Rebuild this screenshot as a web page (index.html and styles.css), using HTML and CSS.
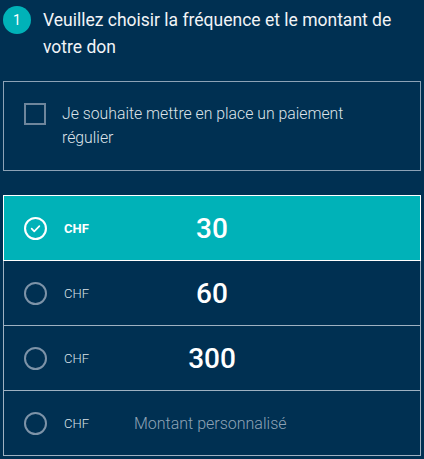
FILE: index.html
```html
<!DOCTYPE html>
<html lang="fr">
<head>
<meta charset="utf-8">
<link rel="stylesheet" href="styles.css">
</head>
<body>
<div class="page">
  <div class="step">
    <span class="step-num">1</span>
    <h2 class="step-title">Veuillez choisir la fréquence et le montant de votre don</h2>
  </div>

  <label class="recurring">
    <span class="checkbox"></span>
    <span class="recurring-text">Je souhaite mettre en place un paiement régulier</span>
  </label>

  <div class="amounts">
    <div class="amount-row selected">
      <div class="amount-left">
        <span class="radio checked">
          <svg viewBox="0 0 22 22" width="22" height="22"><circle cx="11" cy="11" r="10" fill="none" stroke="#fff" stroke-width="2"/><path d="M7.3 11.2l2.5 2.5 4.9-5" fill="none" stroke="#fff" stroke-width="1.6" stroke-linecap="round" stroke-linejoin="round"/></svg>
        </span>
        <span class="currency">CHF</span>
      </div>
      <span class="amount">30</span>
      <span></span>
    </div>
    <div class="amount-row">
      <div class="amount-left">
        <span class="radio"></span>
        <span class="currency">CHF</span>
      </div>
      <span class="amount">60</span>
      <span></span>
    </div>
    <div class="amount-row">
      <div class="amount-left">
        <span class="radio"></span>
        <span class="currency">CHF</span>
      </div>
      <span class="amount">300</span>
      <span></span>
    </div>
    <div class="amount-row custom">
      <span class="radio"></span>
      <span class="currency">CHF</span>
      <input class="custom-input" type="text" placeholder="Montant personnalisé">
    </div>
  </div>
</div>
</body>
</html>
```

FILE: styles.css
```css
* { box-sizing: border-box; }

html, body {
  margin: 0;
  padding: 0;
  background: #003052;
}

body {
  font-family: Roboto, "Liberation Sans", Arial, sans-serif;
  color: #f2f4f7;
  width: 424px;
  height: 459px;
  overflow: hidden;
}

.page {
  padding: 7px 3px 0 3px;
}

.step {
  display: flex;
  align-items: flex-start;
  gap: 12px;
}

.step-num {
  flex: none;
  width: 28px;
  height: 28px;
  margin-top: -1px;
  border-radius: 50%;
  background: #00b2b8;
  color: #fff;
  font-size: 14px;
  font-weight: 400;
  display: flex;
  align-items: center;
  justify-content: center;
}

.step-title {
  margin: 0;
  font-size: 17.5px;
  font-weight: 400;
  line-height: 27px;
  color: #f2f4f7;
}

.recurring {
  display: flex;
  align-items: flex-start;
  gap: 16px;
  margin-top: 20px;
  padding: 20px;
  border: 1px solid #8ca2b6;
  min-height: 90px;
}

.checkbox {
  flex: none;
  width: 22px;
  height: 22px;
  margin-top: 1px;
  border: 2px solid #6e869c;
}

.recurring-text {
  font-size: 15.8px;
  font-weight: 300;
  line-height: 24px;
  color: #dde3e9;
  padding-right: 50px;
}

.amounts {
  margin-top: 24px;
  display: flex;
  flex-direction: column;
}

.amount-row {
  position: relative;
  height: 66px;
  margin-top: -1px;
  border: 1px solid #9eb1c2;
  display: grid;
  grid-template-columns: 1fr auto 1fr;
  align-items: center;
  padding-left: 20px;
}

.amount-row:first-child { margin-top: 0; }

.amount-row.selected {
  background: #00b2b8;
  border-color: #ffffff;
  z-index: 1;
}

.amount-left {
  display: flex;
  align-items: center;
  gap: 17px;
}

.radio {
  flex: none;
  width: 23px;
  height: 23px;
  border: 2px solid #7d93a8;
  border-radius: 50%;
  display: flex;
  align-items: center;
  justify-content: center;
}

.radio.checked {
  border: none;
}

.radio.checked svg { display: block; width: 23px; height: 23px; }

.currency {
  font-size: 13px;
  font-weight: 300;
  color: #dbe2e8;
}

.selected .currency {
  color: #fff;
  font-weight: 700;
}

.amount {
  font-size: 28px;
  font-weight: 500;
  color: #fff;
  margin-right: 20px;
  text-align: center;
}

.amount-row.custom {
  display: flex;
  align-items: center;
  gap: 17px;
}

.custom-input {
  margin-left: 28px;
  flex: 1;
  background: transparent;
  border: none;
  outline: none;
  padding: 0;
  font-family: Roboto, "Liberation Sans", Arial, sans-serif;
  font-size: 16px;
  font-weight: 300;
  color: #fff;
}

.custom-input::placeholder {
  color: #8ea3b6;
  opacity: 1;
}
```
